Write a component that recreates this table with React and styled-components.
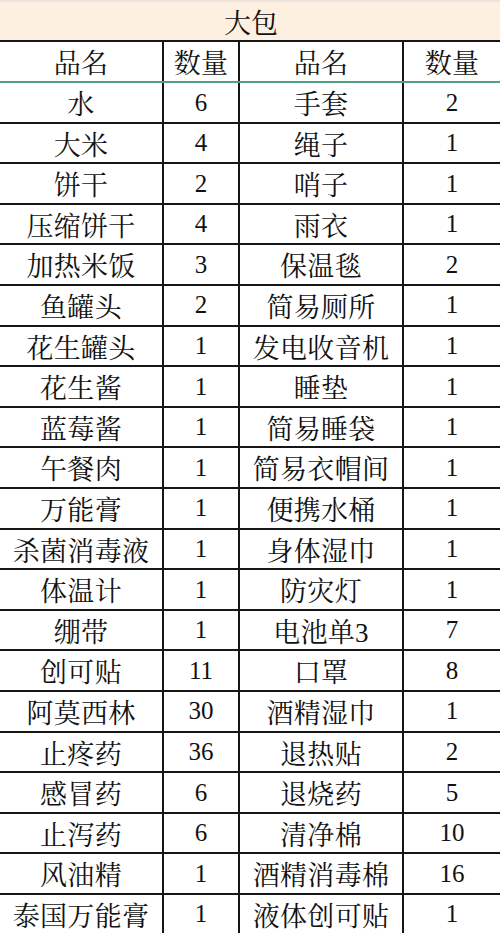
import React from 'react';
import styled, { createGlobalStyle } from 'styled-components';

// 大包清单：左右两栏，每栏品名 + 数量
const leftItems = [
  ['水', 6], ['大米', 4], ['饼干', 2], ['压缩饼干', 4], ['加热米饭', 3],
  ['鱼罐头', 2], ['花生罐头', 1], ['花生酱', 1], ['蓝莓酱', 1], ['午餐肉', 1],
  ['万能膏', 1], ['杀菌消毒液', 1], ['体温计', 1], ['绷带', 1], ['创可贴', 11],
  ['阿莫西林', 30], ['止疼药', 36], ['感冒药', 6], ['止泻药', 6], ['风油精', 1],
  ['泰国万能膏', 1],
];

const rightItems = [
  ['手套', 2], ['绳子', 1], ['哨子', 1], ['雨衣', 1], ['保温毯', 2],
  ['简易厕所', 1], ['发电收音机', 1], ['睡垫', 1], ['简易睡袋', 1], ['简易衣帽间', 1],
  ['便携水桶', 1], ['身体湿巾', 1], ['防灾灯', 1], ['电池单3', 7], ['口罩', 8],
  ['酒精湿巾', 1], ['退热贴', 2], ['退烧药', 5], ['清净棉', 10], ['酒精消毒棉', 16],
  ['液体创可贴', 1],
];

const GlobalStyle = createGlobalStyle`
  html, body {
    margin: 0;
    padding: 0;
    background: #ffffff;
  }
  body {
    font-family: "Liberation Serif", "Noto Serif CJK SC", "Noto Sans CJK SC", serif;
    color: #111;
    overflow: hidden;
  }
`;

const Sheet = styled.div`
  width: 500px;
  height: 933px;
  overflow: hidden;
  background: #fff;
`;

const Title = styled.div`
  height: 42px;
  box-sizing: border-box;
  border-top: 2px solid #ece3dd;
  border-bottom: 2px solid #161616;
  background: #fdf0e1;
  display: flex;
  align-items: center;
  justify-content: center;
  font-size: 27px;
  padding-left: 2px;
`;

const Row = styled.div`
  display: grid;
  grid-template-columns: 164px 76px 164px 1fr;
  height: ${(p) => (p.$head ? '41px' : '40.6px')};
  box-sizing: border-box;
  border-bottom: ${(p) => (p.$head ? '2px solid #4f9f82' : '2px solid #161616')};
`;

const Cell = styled.div`
  display: flex;
  align-items: center;
  justify-content: center;
  font-size: ${(p) => (p.$num ? '25px' : '27px')};
  white-space: nowrap;
  border-right: ${(p) => (p.$last ? 'none' : '2px solid #161616')};
  letter-spacing: ${(p) => (p.$num ? '0' : '0.3px')};
`;

const App = () => {
  return (
    <>
      <GlobalStyle />
      <Sheet>
        <Title>大包</Title>
        <Row $head>
          <Cell>品名</Cell>
          <Cell>数量</Cell>
          <Cell>品名</Cell>
          <Cell $last>数量</Cell>
        </Row>
        {leftItems.map(([name, qty], i) => (
          <Row key={name}>
            <Cell>{name}</Cell>
            <Cell $num>{qty}</Cell>
            <Cell>{rightItems[i][0]}</Cell>
            <Cell $num $last>{rightItems[i][1]}</Cell>
          </Row>
        ))}
      </Sheet>
    </>
  );
};

export default App;
